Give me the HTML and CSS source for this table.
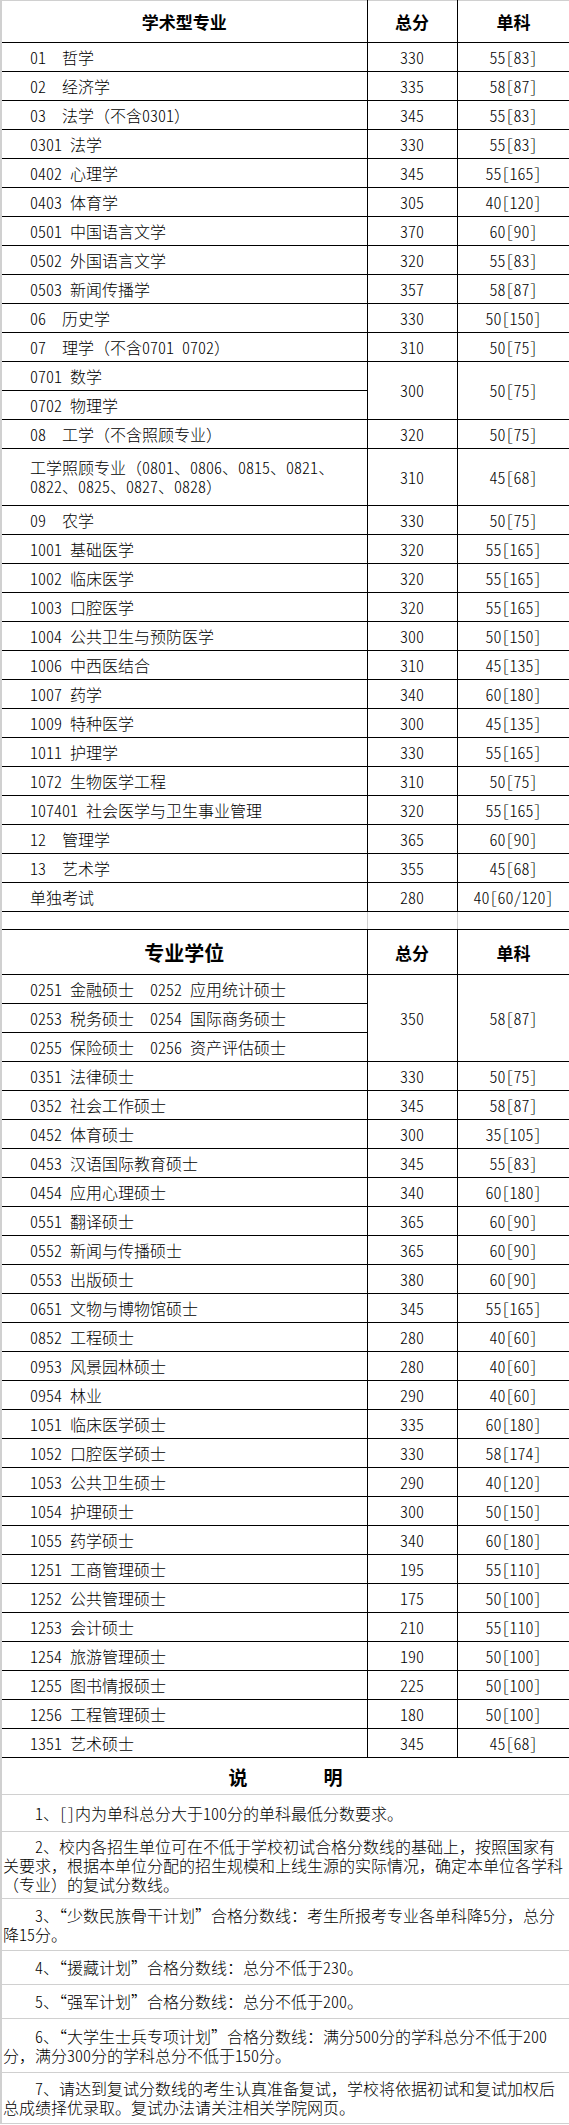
FILE: index.html
```html
<!DOCTYPE html>
<html lang="zh-CN">
<head>
<meta charset="utf-8">
<title>复试分数线</title>
<link rel="stylesheet" href="styles.css">
</head>
<body>
<table class="grid">
  <colgroup><col class="c-name"><col class="c-total"><col class="c-single"></colgroup>
  <tbody>
    <tr class="r-head1"><th class="hd top first">学术型专业</th><th class="hd top">总分</th><th class="hd top">单科</th></tr>
    <tr class="r"><td class="lbl"><span class="code">01  </span>哲学</td><td class="num">330</td><td class="num">55[83]</td></tr>
    <tr class="r"><td class="lbl"><span class="code">02  </span>经济学</td><td class="num">335</td><td class="num">58[87]</td></tr>
    <tr class="r"><td class="lbl"><span class="code">03  </span>法学（不含<span class="h">0301</span>）</td><td class="num">345</td><td class="num">55[83]</td></tr>
    <tr class="r"><td class="lbl"><span class="code">0301 </span>法学</td><td class="num">330</td><td class="num">55[83]</td></tr>
    <tr class="r"><td class="lbl"><span class="code">0402 </span>心理学</td><td class="num">345</td><td class="num">55[165]</td></tr>
    <tr class="r"><td class="lbl"><span class="code">0403 </span>体育学</td><td class="num">305</td><td class="num">40[120]</td></tr>
    <tr class="r"><td class="lbl"><span class="code">0501 </span>中国语言文学</td><td class="num">370</td><td class="num">60[90]</td></tr>
    <tr class="r"><td class="lbl"><span class="code">0502 </span>外国语言文学</td><td class="num">320</td><td class="num">55[83]</td></tr>
    <tr class="r"><td class="lbl"><span class="code">0503 </span>新闻传播学</td><td class="num">357</td><td class="num">58[87]</td></tr>
    <tr class="r"><td class="lbl"><span class="code">06  </span>历史学</td><td class="num">330</td><td class="num">50[150]</td></tr>
    <tr class="r"><td class="lbl"><span class="code">07  </span>理学（不含<span class="h">0701 0702</span>）</td><td class="num">310</td><td class="num">50[75]</td></tr>
    <tr class="r"><td class="lbl"><span class="code">0701 </span>数学</td><td class="num" rowspan="2">300</td><td class="num" rowspan="2">50[75]</td></tr>
    <tr class="r"><td class="lbl"><span class="code">0702 </span>物理学</td></tr>
    <tr class="r"><td class="lbl"><span class="code">08  </span>工学（不含照顾专业）</td><td class="num">320</td><td class="num">50[75]</td></tr>
    <tr class="r-double"><td class="lbl">工学照顾专业（<span class="h">0801</span>、<span class="h">0806</span>、<span class="h">0815</span>、<span class="h">0821</span>、<br><span class="h">0822</span>、<span class="h">0825</span>、<span class="h">0827</span>、<span class="h">0828</span>）</td><td class="num">310</td><td class="num">45[68]</td></tr>
    <tr class="r"><td class="lbl"><span class="code">09  </span>农学</td><td class="num">330</td><td class="num">50[75]</td></tr>
    <tr class="r"><td class="lbl"><span class="code">1001 </span>基础医学</td><td class="num">320</td><td class="num">55[165]</td></tr>
    <tr class="r"><td class="lbl"><span class="code">1002 </span>临床医学</td><td class="num">320</td><td class="num">55[165]</td></tr>
    <tr class="r"><td class="lbl"><span class="code">1003 </span>口腔医学</td><td class="num">320</td><td class="num">55[165]</td></tr>
    <tr class="r"><td class="lbl"><span class="code">1004 </span>公共卫生与预防医学</td><td class="num">300</td><td class="num">50[150]</td></tr>
    <tr class="r"><td class="lbl"><span class="code">1006 </span>中西医结合</td><td class="num">310</td><td class="num">45[135]</td></tr>
    <tr class="r"><td class="lbl"><span class="code">1007 </span>药学</td><td class="num">340</td><td class="num">60[180]</td></tr>
    <tr class="r"><td class="lbl"><span class="code">1009 </span>特种医学</td><td class="num">300</td><td class="num">45[135]</td></tr>
    <tr class="r"><td class="lbl"><span class="code">1011 </span>护理学</td><td class="num">330</td><td class="num">55[165]</td></tr>
    <tr class="r"><td class="lbl"><span class="code">1072 </span>生物医学工程</td><td class="num">310</td><td class="num">50[75]</td></tr>
    <tr class="r"><td class="lbl"><span class="code">107401 </span>社会医学与卫生事业管理</td><td class="num">320</td><td class="num">55[165]</td></tr>
    <tr class="r"><td class="lbl"><span class="code">12  </span>管理学</td><td class="num">365</td><td class="num">60[90]</td></tr>
    <tr class="r"><td class="lbl"><span class="code">13  </span>艺术学</td><td class="num">355</td><td class="num">45[68]</td></tr>
    <tr class="r"><td class="lbl">单独考试</td><td class="num">280</td><td class="num">40[60/120]</td></tr>
    <tr class="r-gap"><td class="gap first"></td><td class="gap"></td><td class="gap"></td></tr>
    <tr class="r-head2"><th class="hd first big2">专业学位</th><th class="hd">总分</th><th class="hd">单科</th></tr>
    <tr class="r"><td class="lbl"><span class="code">0251 </span>金融硕士<span class="code">  0252 </span>应用统计硕士</td><td class="num" rowspan="3">350</td><td class="num" rowspan="3">58[87]</td></tr>
    <tr class="r"><td class="lbl"><span class="code">0253 </span>税务硕士<span class="code">  0254 </span>国际商务硕士</td></tr>
    <tr class="r"><td class="lbl"><span class="code">0255 </span>保险硕士<span class="code">  0256 </span>资产评估硕士</td></tr>
    <tr class="r"><td class="lbl"><span class="code">0351 </span>法律硕士</td><td class="num">330</td><td class="num">50[75]</td></tr>
    <tr class="r"><td class="lbl"><span class="code">0352 </span>社会工作硕士</td><td class="num">345</td><td class="num">58[87]</td></tr>
    <tr class="r"><td class="lbl"><span class="code">0452 </span>体育硕士</td><td class="num">300</td><td class="num">35[105]</td></tr>
    <tr class="r"><td class="lbl"><span class="code">0453 </span>汉语国际教育硕士</td><td class="num">345</td><td class="num">55[83]</td></tr>
    <tr class="r"><td class="lbl"><span class="code">0454 </span>应用心理硕士</td><td class="num">340</td><td class="num">60[180]</td></tr>
    <tr class="r"><td class="lbl"><span class="code">0551 </span>翻译硕士</td><td class="num">365</td><td class="num">60[90]</td></tr>
    <tr class="r"><td class="lbl"><span class="code">0552 </span>新闻与传播硕士</td><td class="num">365</td><td class="num">60[90]</td></tr>
    <tr class="r"><td class="lbl"><span class="code">0553 </span>出版硕士</td><td class="num">380</td><td class="num">60[90]</td></tr>
    <tr class="r"><td class="lbl"><span class="code">0651 </span>文物与博物馆硕士</td><td class="num">345</td><td class="num">55[165]</td></tr>
    <tr class="r"><td class="lbl"><span class="code">0852 </span>工程硕士</td><td class="num">280</td><td class="num">40[60]</td></tr>
    <tr class="r"><td class="lbl"><span class="code">0953 </span>风景园林硕士</td><td class="num">280</td><td class="num">40[60]</td></tr>
    <tr class="r"><td class="lbl"><span class="code">0954 </span>林业</td><td class="num">290</td><td class="num">40[60]</td></tr>
    <tr class="r"><td class="lbl"><span class="code">1051 </span>临床医学硕士</td><td class="num">335</td><td class="num">60[180]</td></tr>
    <tr class="r"><td class="lbl"><span class="code">1052 </span>口腔医学硕士</td><td class="num">330</td><td class="num">58[174]</td></tr>
    <tr class="r"><td class="lbl"><span class="code">1053 </span>公共卫生硕士</td><td class="num">290</td><td class="num">40[120]</td></tr>
    <tr class="r"><td class="lbl"><span class="code">1054 </span>护理硕士</td><td class="num">300</td><td class="num">50[150]</td></tr>
    <tr class="r"><td class="lbl"><span class="code">1055 </span>药学硕士</td><td class="num">340</td><td class="num">60[180]</td></tr>
    <tr class="r"><td class="lbl"><span class="code">1251 </span>工商管理硕士</td><td class="num">195</td><td class="num">55[110]</td></tr>
    <tr class="r"><td class="lbl"><span class="code">1252 </span>公共管理硕士</td><td class="num">175</td><td class="num">50[100]</td></tr>
    <tr class="r"><td class="lbl"><span class="code">1253 </span>会计硕士</td><td class="num">210</td><td class="num">55[110]</td></tr>
    <tr class="r"><td class="lbl"><span class="code">1254 </span>旅游管理硕士</td><td class="num">190</td><td class="num">50[100]</td></tr>
    <tr class="r"><td class="lbl"><span class="code">1255 </span>图书情报硕士</td><td class="num">225</td><td class="num">50[100]</td></tr>
    <tr class="r"><td class="lbl"><span class="code">1256 </span>工程管理硕士</td><td class="num">180</td><td class="num">50[100]</td></tr>
    <tr class="r"><td class="lbl"><span class="code">1351 </span>艺术硕士</td><td class="num">345</td><td class="num">45[68]</td></tr>
    <tr class="r-title"><td class="notes-title" colspan="3">说　　　　明</td></tr>
    <tr class="n-37"><td class="note" colspan="3"><span class="h">1</span>、<span class="h">[]</span>内为单科总分大于<span class="h">100</span>分的单科最低分数要求。</td></tr>
    <tr class="n-67"><td class="note" colspan="3"><span class="h">2</span>、校内各招生单位可在不低于学校初试合格分数线的基础上，按照国家有<br>关要求，根据本单位分配的招生规模和上线生源的实际情况，确定本单位各学科<br>（专业）的复试分数线。</td></tr>
    <tr class="n-52"><td class="note" colspan="3"><span class="h">3</span>、“少数民族骨干计划”合格分数线：考生所报考专业各单科降<span class="h">5</span>分，总分<br>降<span class="h">15</span>分。</td></tr>
    <tr class="n-34"><td class="note" colspan="3"><span class="h">4</span>、“援藏计划”合格分数线：总分不低于<span class="h">230</span>。</td></tr>
    <tr class="n-34"><td class="note" colspan="3"><span class="h">5</span>、“强军计划”合格分数线：总分不低于<span class="h">200</span>。</td></tr>
    <tr class="n-54"><td class="note" colspan="3"><span class="h">6</span>、“大学生士兵专项计划”合格分数线：满分<span class="h">500</span>分的学科总分不低于<span class="h">200</span><br>分，满分<span class="h">300</span>分的学科总分不低于<span class="h">150</span>分。</td></tr>
    <tr class="n-51"><td class="note" colspan="3"><span class="h">7</span>、请达到复试分数线的考生认真准备复试，学校将依据初试和复试加权后<br>总成绩择优录取。复试办法请关注相关学院网页。</td></tr>
  </tbody>
</table>
</body>
</html>
```

FILE: styles.css
```css
html, body {
  margin: 0;
  padding: 0;
  background: #ffffff;
}

body {
  font-family: "Noto Sans CJK SC", "Noto Sans CJK JP", sans-serif;
  font-size: 16px;
  font-weight: 300;
  color: #000000;
}

.grid {
  width: 569px;
  table-layout: fixed;
  border-collapse: collapse;
  border-spacing: 0;
}

.c-name { width: 366px; }
.c-total { width: 90px; }
.c-single { width: 113px; }

td, th {
  padding: 0;
  vertical-align: middle;
  line-height: 19px;
}

/* row heights */
.r { height: 29px; }
.r-double { height: 57px; }
.r-head1 { height: 42px; }
.r-gap { height: 18px; }
.r-head2 { height: 45px; }
.r-title { height: 37px; }
.n-37 { height: 37px; }
.n-67 { height: 67px; }
.n-52 { height: 52px; }
.n-34 { height: 34px; }
.n-54 { height: 54px; }
.n-51 { height: 51px; }

/* half-width latin like SimSun */
.h, .code, .num {
  font-feature-settings: "hwid" 1;
}

.code {
  white-space: pre;
}

/* black-ruled data cells */
.hd, .lbl, .num {
  border: 1px solid #000000;
}

.hd {
  font-size: 17px;
  font-weight: bold;
  text-align: center;
}

.hd.top { border-top: 1px solid #d0d0d0; }

.hd.big2 { font-size: 20px; }

.lbl {
  text-align: left;
  white-space: nowrap;
  padding-left: 28px;
  border-left: 2px solid #d0d0d0;
}

.hd.first { border-left: 2px solid #d0d0d0; }

.num {
  text-align: center;
  white-space: nowrap;
}

/* blank separator row */
.gap {
  border: 1px solid #d0d0d0;
  border-bottom: 1px solid #000000;
}

.gap.first { border-left: 2px solid #d0d0d0; }

/* notes */
.notes-title {
  font-size: 19px;
  font-weight: bold;
  text-align: center;
  border: 1px solid #d0d0d0;
  border-left: 2px solid #d0d0d0;
  border-right: 2px solid #d0d0d0;
}

.note {
  text-align: left;
  white-space: nowrap;
  text-indent: 2em;
  padding-left: 1px;
  line-height: 19px;
  border: 1px solid #d0d0d0;
  border-left: 2px solid #d0d0d0;
  border-right: 2px solid #d0d0d0;
}
```
